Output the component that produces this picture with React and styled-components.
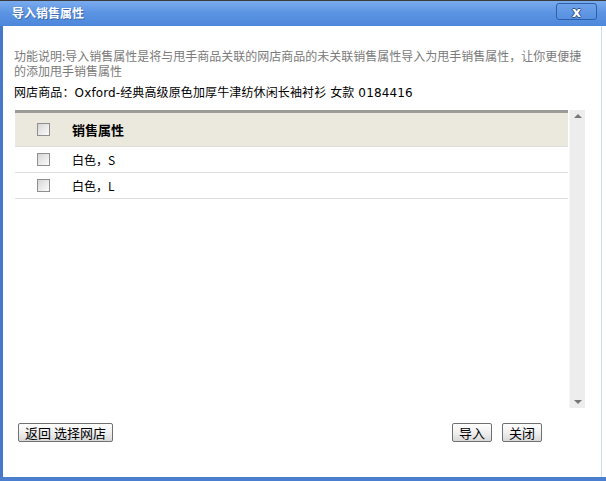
import styled, { createGlobalStyle } from "styled-components";

const GlobalStyle = createGlobalStyle`
  html, body {
    margin: 0;
    padding: 0;
    background: #ffffff;
  }
  body {
    font-family: "DejaVu Sans", "Noto Sans CJK SC", sans-serif;
    font-size: 12px;
    color: #000;
  }
`;

const Window = styled.div`
  width: 606px;
  height: 481px;
  box-sizing: border-box;
  display: flex;
  flex-direction: column;
  border-bottom: 4px solid #4a7fd0;
  background: #fff;
`;

const TitleBar = styled.div`
  height: 26px;
  box-sizing: border-box;
  border-top: 1px solid #3b3b3b;
  background: linear-gradient(#7aabee, #5a93e2 50%, #4d87da);
  display: flex;
  align-items: flex-start;
  justify-content: space-between;
  padding: 0 9px 0 12px;
`;

const Title = styled.span`
  font-family: "Noto Sans CJK SC", sans-serif;
  font-weight: bold;
  font-size: 12px;
  line-height: 24px;
  color: #fff;
  text-shadow: 1px 1px 0 #3a68ad;
`;

const CloseButton = styled.div`
  margin-top: 2px;
  width: 41px;
  height: 17px;
  box-sizing: border-box;
  border: 1px solid #2f5fa8;
  border-radius: 3px;
  background: linear-gradient(#6ea2ea, #5690e0);
  display: flex;
  align-items: center;
  justify-content: center;
  font-family: "DejaVu Sans", sans-serif;
  font-weight: bold;
  font-size: 14px;
  line-height: 1;
  color: #fff;
  text-shadow: -1px 0 #2b4f86, 1px 0 #2b4f86, 0 -1px #2b4f86, 0 1px #2b4f86;
`;

const Body = styled.div`
  flex: 1;
  display: flex;
  flex-direction: column;
  border-left: 3px solid #4777c8;
  border-right: 1px solid #c9dcf5;
  margin-right: 4px;
  padding: 22px 14px 0 11px;
`;

const Description = styled.p`
  margin: 0;
  font-family: "Noto Sans CJK SC", sans-serif;
  font-size: 12px;
  line-height: 15px;
  color: #7a7a7a;
`;

const ProductLine = styled.div`
  margin-top: 7px;
  line-height: 16px;
  font-size: 12px;
  letter-spacing: 0.12px;
  color: #000;
`;

const ListArea = styled.div`
  margin-top: 9px;
  margin-left: 1px;
  height: 298px;
  display: grid;
  grid-template-columns: 553px 16px;
  column-gap: 1px;
`;

const Table = styled.div`
  border-top: 3px solid #9a9a96;
  display: flex;
  flex-direction: column;
`;

const Row = styled.div`
  display: flex;
  align-items: center;
  height: ${(p) => (p.$header ? "33px" : "25px")};
  background: ${(p) => (p.$header ? "#ebe9dd" : "#fff")};
  border-bottom: 1px solid #dddddd;
  font-family: "Noto Sans CJK SC", sans-serif;
  font-size: ${(p) => (p.$header ? "13px" : "12px")};
  font-weight: ${(p) => (p.$header ? "bold" : "normal")};
`;

const CheckCell = styled.div`
  width: 57px;
  display: flex;
  justify-content: center;
`;

const Check = styled.span`
  display: block;
  width: 11px;
  height: 11px;
  border: 1px solid #8f8f8f;
  background: linear-gradient(135deg, #d6d6d6, #f4f4f4 80%, #ffffff);
`;

const Scrollbar = styled.div`
  background: #ededed;
  border-left: 1px solid #f6f6f6;
  display: flex;
  flex-direction: column;
  justify-content: space-between;
  align-items: center;
  padding: 4px 0;
`;

const Arrow = styled.span`
  width: 0;
  height: 0;
  border-left: 4px solid transparent;
  border-right: 4px solid transparent;
  ${(p) =>
    p.$up
      ? "border-bottom: 4px solid #777;"
      : "border-top: 4px solid #777;"}
`;

const Footer = styled.div`
  margin-top: 15px;
  display: flex;
  justify-content: space-between;
  padding-left: 4px;
  padding-right: 45px;
`;

const ButtonGroup = styled.div`
  display: flex;
  gap: 10px;
`;

const Button = styled.button`
  height: 19px;
  padding: 0 6px;
  box-sizing: border-box;
  border: 1px solid #707070;
  border-radius: 2px;
  background: linear-gradient(#ffffff, #ececec 60%, #d8d8d8);
  font-family: "Noto Sans CJK SC", sans-serif;
  font-size: 13px;
  line-height: 17px;
  color: #000;
  cursor: pointer;
`;

const rows = ["白色，S", "白色，L"];

export default function App() {
  return (
    <>
      <GlobalStyle />
      <Window>
        <TitleBar>
          <Title>导入销售属性</Title>
          <CloseButton>x</CloseButton>
        </TitleBar>
        <Body>
          <Description>
            功能说明:导入销售属性是将与甩手商品关联的网店商品的未关联销售属性导入为甩手销售属性，让你更便捷的添加甩手销售属性
          </Description>
          <ProductLine>
            网店商品：Oxford-经典高级原色加厚牛津纺休闲长袖衬衫 女款 0184416
          </ProductLine>
          <ListArea>
            <Table>
              <Row $header>
                <CheckCell>
                  <Check />
                </CheckCell>
                <span>销售属性</span>
              </Row>
              {rows.map((r) => (
                <Row key={r}>
                  <CheckCell>
                    <Check />
                  </CheckCell>
                  <span>{r}</span>
                </Row>
              ))}
            </Table>
            <Scrollbar>
              <Arrow $up />
              <Arrow />
            </Scrollbar>
          </ListArea>
          <Footer>
            <Button>返回 选择网店</Button>
            <ButtonGroup>
              <Button>导入</Button>
              <Button>关闭</Button>
            </ButtonGroup>
          </Footer>
        </Body>
      </Window>
    </>
  );
}
